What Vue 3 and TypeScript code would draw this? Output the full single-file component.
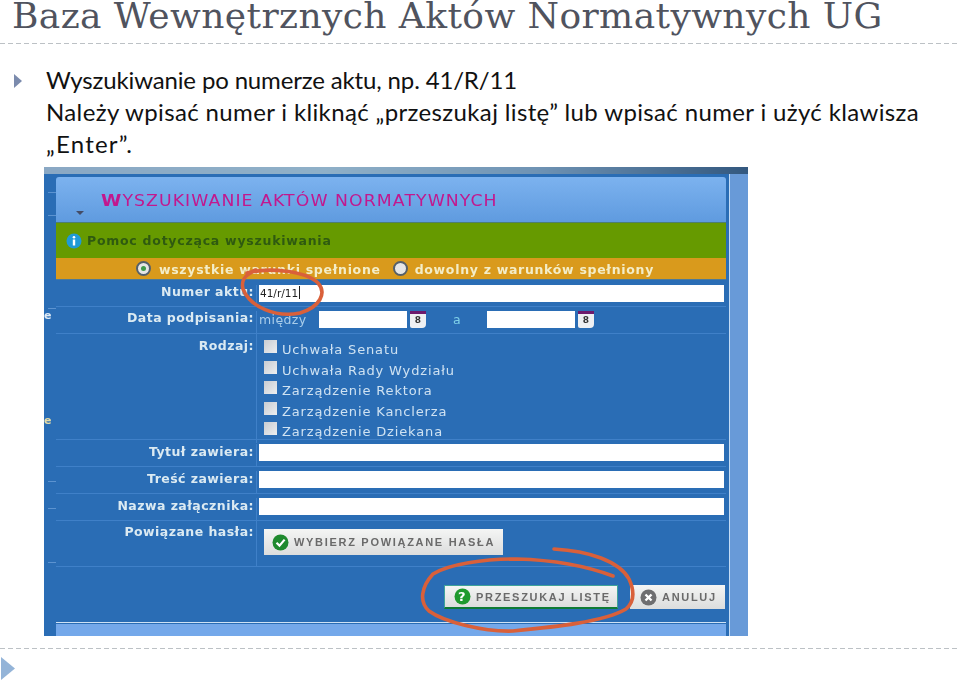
<script setup lang="ts">
const kinds: string[] = [
  'Uchwała Senatu',
  'Uchwała Rady Wydziału',
  'Zarządzenie Rektora',
  'Zarządzenie Kanclerza',
  'Zarządzenie Dziekana',
]
const textRows: { label: string }[] = [
  { label: 'Tytuł zawiera:' },
  { label: 'Treść zawiera:' },
  { label: 'Nazwa załącznika:' },
]
const ticks: number[] = [18, 41, 134, 307, 334, 388]
</script>

<template>
  <div class="slide">
    <h1 class="title">Baza Wewnętrznych Aktów Normatywnych UG</h1>
    <div class="dash"></div>
    <div class="bullet">
      <svg class="marker" width="8" height="14" viewBox="0 0 8 14"><path d="M0 0L8 7L0 14Z" fill="#7b8bad" /></svg>
      <p class="text">
        <span class="l1">Wyszukiwanie po numerze aktu, np. 41/R/11</span>
        <span class="l2">Należy wpisać numer i kliknąć „przeszukaj listę” lub wpisać numer i użyć klawisza</span>
        <span class="l3">„Enter”.</span>
      </p>
    </div>

    <div class="shot">
      <div class="shot-top"></div>
      <div class="shot-body">
        <div class="left-strip">
          <i v-for="t in ticks" :key="t" class="tick" :style="{ top: t + 'px' }"></i>
          <span class="cut cut-a">e</span>
          <span class="cut cut-b">e</span>
        </div>
        <div class="panel">
          <div class="head">
            <span class="arrow"></span>
            <span class="head-title"><b>W</b>YSZUKIWANIE AKTÓW NORMATYWNYCH</span>
          </div>
          <div class="help">
            <svg width="16" height="16" viewBox="0 0 16 16"><circle cx="8" cy="8" r="7.5" fill="#1f9ad6" /><circle cx="8" cy="4.2" r="1.3" fill="#fff" /><rect x="6.8" y="6.5" width="2.4" height="6" fill="#fff" /></svg>
            <span>Pomoc dotycząca wyszukiwania</span>
          </div>
          <div class="mode">
            <span class="radio on"></span><span class="mode-a">wszystkie warunki spełnione</span>
            <span class="radio"></span><span class="mode-b">dowolny z warunków spełniony</span>
          </div>
          <div class="row r-num">
            <div class="lab">Numer aktu:</div>
            <div class="val"><div class="inp typed">41/r/11<i class="caret"></i></div></div>
          </div>
          <div class="row r-date">
            <div class="lab">Data podpisania:</div>
            <div class="val dates">
              <span class="between">między</span>
              <div class="inp d1"></div>
              <span class="cal"><em></em>8</span>
              <span class="a">a</span>
              <div class="inp d2"></div>
              <span class="cal"><em></em>8</span>
            </div>
          </div>
          <div class="row r-kind">
            <div class="lab">Rodzaj:</div>
            <div class="val kinds">
              <div v-for="k in kinds" :key="k" class="kind"><span class="box"></span>{{ k }}</div>
            </div>
          </div>
          <div v-for="r in textRows" :key="r.label" class="row r-text">
            <div class="lab">{{ r.label }}</div>
            <div class="val"><div class="inp"></div></div>
          </div>
          <div class="row r-link">
            <div class="lab">Powiązane hasła:</div>
            <div class="val">
              <div class="btn btn-link">
                <svg width="17" height="17" viewBox="0 0 17 17"><circle cx="8.5" cy="8.5" r="8" fill="#1f8a2e" /><path d="M4.5 8.8L7.5 11.6L12.6 5.6" fill="none" stroke="#fff" stroke-width="2.2" /></svg>
                WYBIERZ POWIĄZANE HASŁA
              </div>
            </div>
          </div>
          <div class="actions">
            <div class="btn btn-go">
              <svg width="17" height="17" viewBox="0 0 17 17"><circle cx="8.5" cy="8.5" r="8" fill="#1f9a2e" /><text x="8.5" y="13" text-anchor="middle" class="q">?</text></svg>
              PRZESZUKAJ LISTĘ
            </div>
            <div class="btn btn-no">
              <svg width="17" height="17" viewBox="0 0 17 17"><circle cx="8.5" cy="8.5" r="8" fill="#6e6e70" /><path d="M5.5 5.5L11.5 11.5M11.5 5.5L5.5 11.5" stroke="#fff" stroke-width="2.4" /></svg>
              ANULUJ
            </div>
          </div>
          <div class="foot"></div>
        </div>
        <div class="right-strip"></div>
      </div>
      <svg class="marks" width="704" height="469" viewBox="0 0 704 469">
        <path d="M203 106C225 100 262 104 274 116C283 126 276 140 256 146C232 151 206 140 199 122C197 114 200 108 212 103" fill="none" stroke="#d9603a" stroke-width="3.6" stroke-linecap="round" />
        <path d="M510 382C545 384 575 394 585 412C591 425 590 435 582 442C560 455 510 460 469 464C440 465 400 455 385 444C375 435 377 420 389 407C405 397 440 392 473 392C510 393 545 400 569 409" fill="none" stroke="#d9603a" stroke-width="3.6" stroke-linecap="round" />
      </svg>
    </div>

    <div class="dash bottom"></div>
    <svg class="corner" width="14" height="23" viewBox="0 0 14 23"><path d="M0 0L14 11.5L0 23Z" fill="#94b4d8" /></svg>
  </div>
</template>

<style>
html, body { margin: 0; background: #fff; }
</style>

<style scoped>
.slide {
  width: 960px;
  height: 680px;
  position: relative;
  overflow: hidden;
  background: #fff;
  font-family: "Lato", sans-serif;
}
.title {
  margin: 0;
  padding-left: 12px;
  height: 43px;
  font: 400 36px/32px "DejaVu Serif", serif;
  color: #50535e;
  letter-spacing: 0.41px;
  white-space: nowrap;
}
.dash {
  height: 1px;
  background: repeating-linear-gradient(90deg, #bcc1c5 0 5px, transparent 5px 8px);
}
.bullet {
  display: flex;
  margin-top: 20px;
  padding-left: 14px;
}
.marker { margin-top: 10px; flex: none; }
.text {
  margin: 0 0 0 24px;
  font-size: 24px;
  line-height: 32px;
  color: #111;
  white-space: nowrap;
}
.text span { display: block; }
.l1 { letter-spacing: -0.15px; }
.l2 { letter-spacing: 0.36px; }
.l3 { letter-spacing: 1.2px; }
.shot {
  position: relative;
  width: 704px;
  height: 469px;
  margin: 7px 0 0 44px;
  background: #2a6db5;
  display: flex;
  flex-direction: column;
  filter: blur(0.35px);
}
.shot-top {
  height: 7px;
  background: linear-gradient(90deg, #8aa8c4, #8fb0c8 40%, #6f93b4 70%, #33587f);
}
.shot-body { flex: 1; display: flex; min-height: 0; }
.left-strip { width: 12px; position: relative; background: #2a6db5; }
.tick { position: absolute; left: 4px; width: 8px; height: 1px; background: #5c93d0; }
.cut { position: absolute; left: 0; font: 700 11px/12px "DejaVu Sans", sans-serif; color: #dfeaf5; }
.cut-a { top: 136px; }
.cut-b { top: 241px; color: #e6dca6; }
.panel {
  width: 671px;
  margin-top: 3px;
  background: #2a6db5;
  display: flex;
  flex-direction: column;
  border-radius: 3px 3px 0 0;
  overflow: hidden;
}
.right-strip {
  width: 18px;
  margin-left: 3px;
  background: #689ad8;
  border-left: 1px solid #c4dcf5;
}
.head {
  height: 45px;
  flex: none;
  display: flex;
  align-items: center;
  position: relative;
  padding: 2px 0 0 45px;
  box-sizing: border-box;
  background: linear-gradient(#7cb2ef, #5f9bdf);
}
.arrow {
  position: absolute;
  left: 20px;
  top: 34px;
  border: 4px solid transparent;
  border-top: 4px solid #444c66;
  border-bottom-width: 0;
}
.head-title {
  font: 400 15px/18px "DejaVu Sans", sans-serif;
  color: #c2188e;
  letter-spacing: 0.95px;
  white-space: nowrap;
  transform: scaleX(1.15);
  transform-origin: left center;
}
.head-title b { font-size: 16px; color: #c2188e; }
.help {
  height: 36px;
  flex: none;
  display: flex;
  align-items: center;
  gap: 5px;
  padding-left: 10px;
  background: #669a00;
  border-top: 1px solid #4e7f6e;
  box-sizing: border-box;
  font: 700 12.5px/16px "DejaVu Sans", sans-serif;
  color: #2f5a10;
  letter-spacing: 0.75px;
}
.mode {
  height: 22px;
  flex: none;
  display: flex;
  align-items: center;
  padding-left: 80px;
  background: #d99a1c;
  border-bottom: 1px solid #4f7a95;
  box-sizing: border-box;
  font: 700 12.5px/16px "DejaVu Sans", sans-serif;
  color: #f3edc8;
  letter-spacing: 0.7px;
  white-space: nowrap;
}
.mode-a { margin: 3px 12px 0 8px; }
.mode-b { margin: 3px 0 0 7px; }
.radio {
  width: 15px;
  height: 15px;
  border-radius: 50%;
  background: #e6e6e6;
  border: 2px solid #55606a;
  box-sizing: border-box;
  flex: none;
  position: relative;
}
.radio.on::after {
  content: "";
  position: absolute;
  left: 3px;
  top: 3px;
  width: 5px;
  height: 5px;
  border-radius: 50%;
  background: #3f9a4a;
}
.row {
  display: grid;
  grid-template-columns: 200px 1fr;
  flex: none;
  border-bottom: 1px solid #3f80c8;
  box-sizing: border-box;
}
.lab {
  padding-right: 2px;
  text-align: right;
  font: 700 12.5px/16px "DejaVu Sans", sans-serif;
  color: #dbeaf2;
  letter-spacing: 0.45px;
  white-space: nowrap;
}
.val {
  border-left: 1px solid #3f80c8;
  padding-left: 2px;
  min-width: 0;
}
.inp {
  height: 17px;
  width: 465px;
  background: #fff;
  box-sizing: border-box;
}
.typed {
  padding-left: 1px;
  font: 400 10.5px/17px "DejaVu Sans", sans-serif;
  color: #222;
}
.caret {
  display: inline-block;
  width: 1px;
  height: 13px;
  margin-left: 1px;
  vertical-align: -2px;
  background: #222;
}
.r-num { height: 27px; padding-top: 5px; }
.r-num .lab { margin-top: -1px; }
.r-date { height: 27px; padding-top: 4px; }
.r-date .lab { margin-top: -1px; }
.dates {
  display: flex;
  align-items: flex-start;
  font: 400 12.5px/17px "DejaVu Sans", sans-serif;
  color: #a9cdea;
}
.between { width: 60px; flex: none; letter-spacing: 0.4px; }
.d1, .d2 { width: 88px; flex: none; }
.cal {
  width: 16px;
  height: 17px;
  margin-left: 3px;
  flex: none;
  position: relative;
  box-sizing: border-box;
  padding-top: 3px;
  background: #eef0f3;
  border-radius: 2px 2px 4px 2px;
  font: 700 9px/13px "DejaVu Sans", sans-serif;
  text-align: center;
  color: #333;
}
.cal em {
  position: absolute;
  left: 0;
  top: 0;
  right: 0;
  height: 3px;
  background: #6d1a6d;
}
.a { width: 61px; padding-left: 27px; box-sizing: border-box; color: #7fd0e8; flex: none; }
.r-kind { height: 106px; }
.r-kind .lab { padding-top: 4px; }
.kinds { padding: 6px 0 0 7px; }
.kind {
  height: 20.5px;
  display: flex;
  align-items: center;
  gap: 5px;
  font: 400 13px/16px "DejaVu Sans", sans-serif;
  color: #cfe2f2;
  letter-spacing: 0.85px;
  white-space: nowrap;
}
.box {
  width: 13px;
  height: 13px;
  flex: none;
  margin-top: -7px;
  background: linear-gradient(135deg, #c8ccd2, #eceef0);
}
.r-text { height: 27px; padding-top: 4px; }
.r-link { height: 46px; padding-top: 3px; }
.r-link .val { margin-top: -3px; padding: 8px 0 0 7px; }
.btn {
  display: flex;
  align-items: center;
  gap: 5px;
  box-sizing: border-box;
  background: linear-gradient(#f4f5f4, #dcdddd);
  font: 700 11px/14px "Liberation Sans", sans-serif;
  color: #6a6a6a;
  letter-spacing: 1.7px;
  white-space: nowrap;
}
.btn-link { width: 239px; height: 26px; padding-left: 8px; }
.actions {
  height: 56px;
  flex: none;
  display: flex;
  align-items: flex-start;
  padding: 18px 0 0 388px;
  border-bottom: 1px solid #cfe2f5;
  box-sizing: border-box;
}
.btn-go {
  width: 174px;
  height: 24px;
  padding-left: 9px;
  border: 1px solid #3fa39a;
  border-bottom: 2px solid #0f7a35;
}
.btn-no {
  width: 95px;
  height: 24px;
  margin-left: 12px;
  padding-left: 10px;
}
.foot {
  flex: 1;
  margin-top: 1px;
  background: #74a8ea;
}
.marks { position: absolute; left: 0; top: 0; pointer-events: none; }
.q { font: 700 13px "DejaVu Sans", sans-serif; fill: #fff; }
.bottom {
  position: absolute;
  left: 0;
  right: 0;
  top: 648px;
}
.corner { position: absolute; left: 1px; top: 657px; }
</style>
